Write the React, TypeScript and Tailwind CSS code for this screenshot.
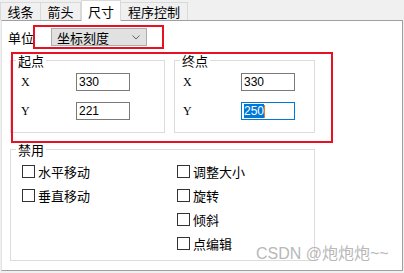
import React from "react";

const cjk = "font-['Microsoft_YaHei','Noto_Sans_CJK_SC',sans-serif]";

function Tab({ label, active, w }: { label: string; active?: boolean; w: string }) {
  return active ? (
    <div className={`${w} h-[21px] -mb-px z-10 bg-white border border-b-0 border-[#d9d9d9] flex items-center justify-center text-[13px] leading-none text-black`}>
      {label}
    </div>
  ) : (
    <div className={`${w} h-[18px] mt-[2px] bg-[#f0f0f0] border border-b-0 border-[#d9d9d9] -ml-px first:ml-0 flex items-center justify-center text-[13px] leading-none text-black`}>
      {label}
    </div>
  );
}

function NumField({ value, focused }: { value: string; focused?: boolean }) {
  return (
    <div
      className={`w-[54px] h-[18px] bg-white border flex items-center pl-[2px] text-[12px] font-['Liberation_Sans',sans-serif] ${
        focused ? "border-[#0078d7]" : "border-[#7a7a7a]"
      }`}
    >
      {focused ? (
        <>
          <span className="bg-[#0078d7] text-white leading-[14px]">{value}</span>
          <span className="w-px h-[13px] bg-[#e08020]" />
        </>
      ) : (
        <span className="leading-[14px]">{value}</span>
      )}
    </div>
  );
}

function PointGroup({
  title,
  x,
  y,
  focusY,
  w,
  pad,
  labelW,
}: {
  title: string;
  x: string;
  y: string;
  focusY?: boolean;
  w: string;
  pad: string;
  labelW: string;
}) {
  return (
    <fieldset className={`${w} border border-[#dcdcdc] p-0`}>
      <legend className="ml-[5px] px-[2px] text-[13px] leading-[15px]">{title}</legend>
      <div className={`${pad} pt-[5px] pb-[12px] flex flex-col gap-[11px]`}>
        {[
          ["X", x, false],
          ["Y", y, focusY],
        ].map(([k, v, f]) => (
          <div key={k as string} className="flex items-center">
            <span className={`${labelW} shrink-0 text-[12px] font-['Liberation_Serif',serif] leading-none`}>{k as string}</span>
            <NumField value={v as string} focused={f as boolean} />
          </div>
        ))}
      </div>
    </fieldset>
  );
}

function Check({ label }: { label: string }) {
  return (
    <div className="flex items-center gap-[3px] h-[13px]">
      <span className="w-[13px] h-[13px] border border-[#333] bg-white" />
      <span className="text-[13px] leading-none">{label}</span>
    </div>
  );
}

export default function App() {
  return (
    <div className={`relative w-[404px] h-[273px] bg-[#f0f0f0] overflow-hidden text-black ${cjk}`}>
      {/* 标签页 */}
      <div className="flex h-[20px] pl-0">
        <Tab label="线条" w="w-[41px]" />
        <Tab label="箭头" w="w-[41px]" />
        <Tab label="尺寸" w="w-[40px]" active />
        <Tab label="程序控制" w="w-[68px]" />
      </div>

      {/* 面板 */}
      <div className="relative ml-px w-[402px] h-[251px] bg-white border border-l-[#e3e3e3] border-[#a0a0a0]">
        <div className="flex items-center h-[18px] mt-[7px] pl-[6px]">
          <span className="w-[26px] shrink-0 text-[13px] leading-none">单位</span>
          <div className="ml-[17px] w-[96px] shrink-0 h-[18px] bg-[#e1e1e1] border border-[#adadad] flex items-center justify-between pl-[5px] pr-[6px]">
            <span className="text-[13px] leading-none">坐标刻度</span>
            <svg width="8" height="5" viewBox="0 0 8 5">
              <path d="M0.5 0.5 L4 4 L7.5 0.5" fill="none" stroke="#606060" strokeWidth="1" />
            </svg>
          </div>
        </div>

        <div className="flex items-start gap-[9px] mt-[7px] pl-[8px]">
          <PointGroup title="起点" x="330" y="221" w="w-[155px]" pad="pl-[10px]" labelW="w-[55px]" />
          <PointGroup title="终点" x="330" y="250" focusY w="w-[141px]" pad="pl-[8px]" labelW="w-[58px]" />
        </div>

        <fieldset className="mt-[9px] ml-[8px] w-[305px] border border-[#dcdcdc] p-0">
          <legend className="ml-[5px] px-[2px] text-[13px] leading-[15px]">禁用</legend>
          <div className="flex pl-[11px] pt-[8px] pb-[10px]">
            <div className="w-[155px] flex flex-col gap-[11px]">
              <Check label="水平移动" />
              <Check label="垂直移动" />
            </div>
            <div className="flex flex-col gap-[11px]">
              <Check label="调整大小" />
              <Check label="旋转" />
              <Check label="倾斜" />
              <Check label="点编辑" />
            </div>
          </div>
        </fieldset>
      </div>

      {/* 红框标注 */}
      <div className="absolute left-[33px] top-[25px] w-[131px] h-[24px] border-2 border-[#e81123]" />
      <div className="absolute left-[11px] top-[52px] w-[322px] h-[91px] border-2 border-[#e81123]" />

      {/* 水印 */}
      <div className="absolute left-[256px] top-[244px] text-[16px] leading-[20px] text-[#b8b8b8] font-['Liberation_Sans','Noto_Sans_CJK_SC',sans-serif]">
        CSDN @炮炮炮~~
      </div>
    </div>
  );
}
